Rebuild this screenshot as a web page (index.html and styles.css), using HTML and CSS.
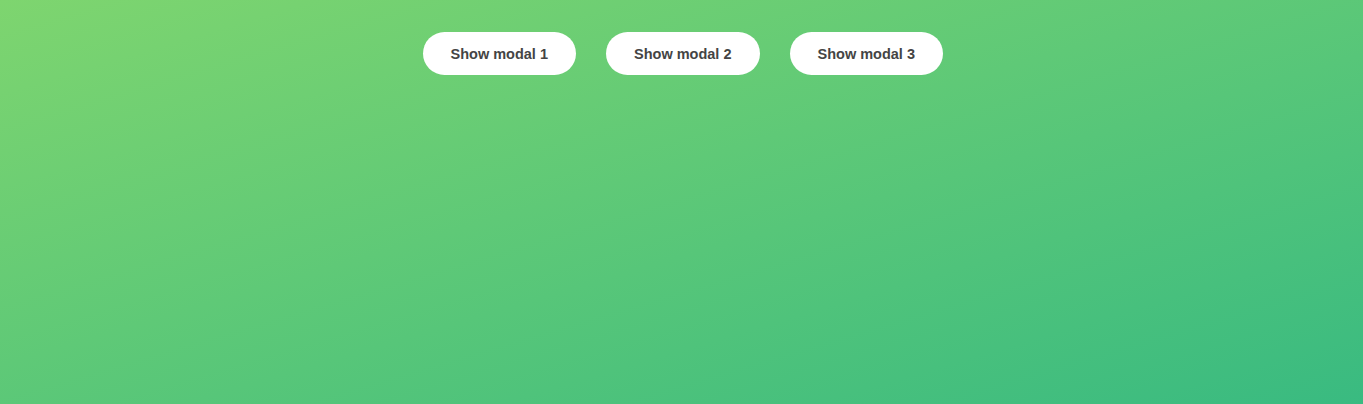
FILE: index.html
```html
<!DOCTYPE html>
<html lang="en">
<head>
<meta charset="utf-8">
<title>Modals</title>
<link rel="stylesheet" href="styles.css">
</head>
<body>
<div class="page">
  <div class="buttons">
    <button class="btn">Show modal 1</button>
    <button class="btn">Show modal 2</button>
    <button class="btn">Show modal 3</button>
  </div>
</div>
</body>
</html>
```

FILE: styles.css
```css
html, body {
  margin: 0;
  padding: 0;
  height: 100%;
}
body {
  font-family: "Liberation Sans", Arial, sans-serif;
}
.page {
  min-height: 100vh;
  background-image: linear-gradient(to right bottom, #7ed56f, #28b485 125%);
  box-sizing: border-box;
  padding-top: 32px;
}
.buttons {
  display: flex;
  justify-content: center;
  gap: 30px;
  padding-left: 2.5px;
}
.btn {
  font-family: "Liberation Sans", Arial, sans-serif;
  font-size: 14.5px;
  font-weight: 700;
  line-height: 17px;
  color: #444;
  background: #fff;
  border: none;
  border-radius: 100px;
  padding: 14px 0 12px;
  width: 153.5px;
  cursor: pointer;
}
```
